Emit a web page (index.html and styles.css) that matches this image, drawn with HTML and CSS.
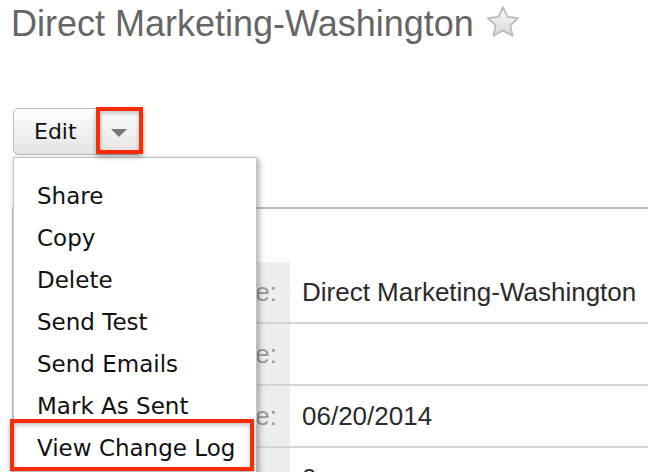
FILE: index.html
```html
<!DOCTYPE html>
<html lang="en">
<head>
    <meta charset="UTF-8">
    <meta name="viewport" content="width=device-width, initial-scale=1.0">
    <title>Direct Marketing-Washington</title>
    <link rel="stylesheet" href="styles.css">
</head>
<body>
    <div class="page">
        <header class="record-header">
            <h1>Direct Marketing-Washington</h1>
            <svg class="favorite" width="36" height="34" viewBox="0 0 34 32">
                <defs>
                    <linearGradient id="starFill" x1="0" y1="0" x2="0" y2="1">
                        <stop offset="0" stop-color="#fdfdfd"/>
                        <stop offset="1" stop-color="#d6d6d6"/>
                    </linearGradient>
                </defs>
                <path d="M17 2 L21.3 11.2 L31.4 12.3 L23.9 19.1 L26 29.1 L17 24 L8 29.1 L10.1 19.1 L2.6 12.3 L12.7 11.2 Z"
                      fill="url(#starFill)" stroke="#b9b9b9" stroke-width="1.6" stroke-linejoin="round"/>
            </svg>
        </header>

        <div class="actions">
            <div class="btn-group">
                <button class="btn">Edit</button>
                <button class="btn btn-caret"><span class="caret"></span></button>
                <span class="callout callout-caret"></span>

                <ul class="dropdown">
                    <li>Share</li>
                    <li>Copy</li>
                    <li>Delete</li>
                    <li>Send Test</li>
                    <li>Send Emails</li>
                    <li>Mark As Sent</li>
                    <li>View Change Log</li>
                </ul>
                <span class="callout callout-item"></span>
            </div>
        </div>

        <main class="record-panel">
            <div class="panel-head"></div>
            <table class="record-fields">
                <tr>
                    <th>Name:</th>
                    <td>Direct Marketing-Washington</td>
                </tr>
                <tr>
                    <th>Start Date:</th>
                    <td></td>
                </tr>
                <tr>
                    <th>End Date:</th>
                    <td>06/20/2014</td>
                </tr>
                <tr>
                    <th>Impressions:</th>
                    <td>0</td>
                </tr>
            </table>
        </main>
    </div>
</body>
</html>
```

FILE: styles.css
```css
body {
    margin: 0;
    padding: 0;
    background-color: #fff;
    font-family: "Liberation Sans", Arial, sans-serif;
    overflow: hidden;
}

.page {
    padding-left: 12px;
}

.record-header {
    display: flex;
    align-items: center;
    height: 40px;
    padding-top: 4px;
}

h1 {
    margin: 0 0 0 -1px;
    font-size: 36px;
    font-weight: normal;
    line-height: 40px;
    color: #666;
    white-space: nowrap;
}

.favorite {
    margin-left: 11px;
    margin-top: -4px;
}

.actions {
    margin-top: 64px;
    height: 47px;
}

.btn-group {
    position: relative;
    display: inline-flex;
    margin-left: 1px;
}

.btn {
    height: 47px;
    margin: 0;
    padding: 0 20px;
    font-family: "DejaVu Sans", Verdana, sans-serif;
    font-size: 22px;
    color: #111;
    background: linear-gradient(#fefefe, #e4e4e4);
    border: 1px solid #bdbdbd;
    border-radius: 5px 0 0 5px;
}

.btn-caret {
    width: 43px;
    padding: 0;
    border-left: none;
    border-radius: 0 5px 5px 0;
}

.caret {
    display: inline-block;
    width: 0;
    height: 0;
    border-left: 8px solid transparent;
    border-right: 8px solid transparent;
    border-top: 8px solid #787878;
    vertical-align: middle;
}

/* kotak merah penanda */
.callout {
    position: absolute;
    box-sizing: border-box;
    border: 4px solid #ff2a00;
    box-shadow: 0 3px 5px rgba(0, 0, 0, 0.3), inset 0 2px 4px rgba(0, 0, 0, 0.25);
    z-index: 3;
}

.callout-caret {
    left: 83px;
    top: -1px;
    width: 47px;
    height: 47px;
}

.callout-item {
    left: -3px;
    top: 311px;
    width: 244px;
    height: 52px;
}

.dropdown {
    position: absolute;
    left: 0;
    top: 49px;
    width: 244px;
    box-sizing: border-box;
    list-style-type: none;
    margin: 0;
    padding: 17px 0 20px;
    background-color: #fff;
    border: 1px solid #c4c4c4;
    box-shadow: 2px 2px 6px rgba(0, 0, 0, 0.35);
    z-index: 2;
}

.dropdown li {
    height: 42px;
    padding-left: 23px;
    font-family: "DejaVu Sans", Verdana, sans-serif;
    font-size: 23px;
    line-height: 42px;
    color: #111;
    white-space: nowrap;
}

.record-panel {
    margin-top: 52px;
    border-top: 2px solid #bcbcbc;
    border-left: 2px solid #ccc;
}

.panel-head {
    height: 53px;
}

.record-fields {
    width: 100%;
    border-collapse: collapse;
}

.record-fields th,
.record-fields td {
    height: 60px;
    padding: 0;
    font-size: 26px;
    font-weight: normal;
    border-bottom: 2px solid #d4d4d4;
    white-space: nowrap;
}

.record-fields th {
    width: 263px;
    padding-right: 13px;
    text-align: right;
    color: #999;
    background-color: #eee;
}

.record-fields td {
    padding-left: 12px;
    color: #2b2b2b;
}
```
